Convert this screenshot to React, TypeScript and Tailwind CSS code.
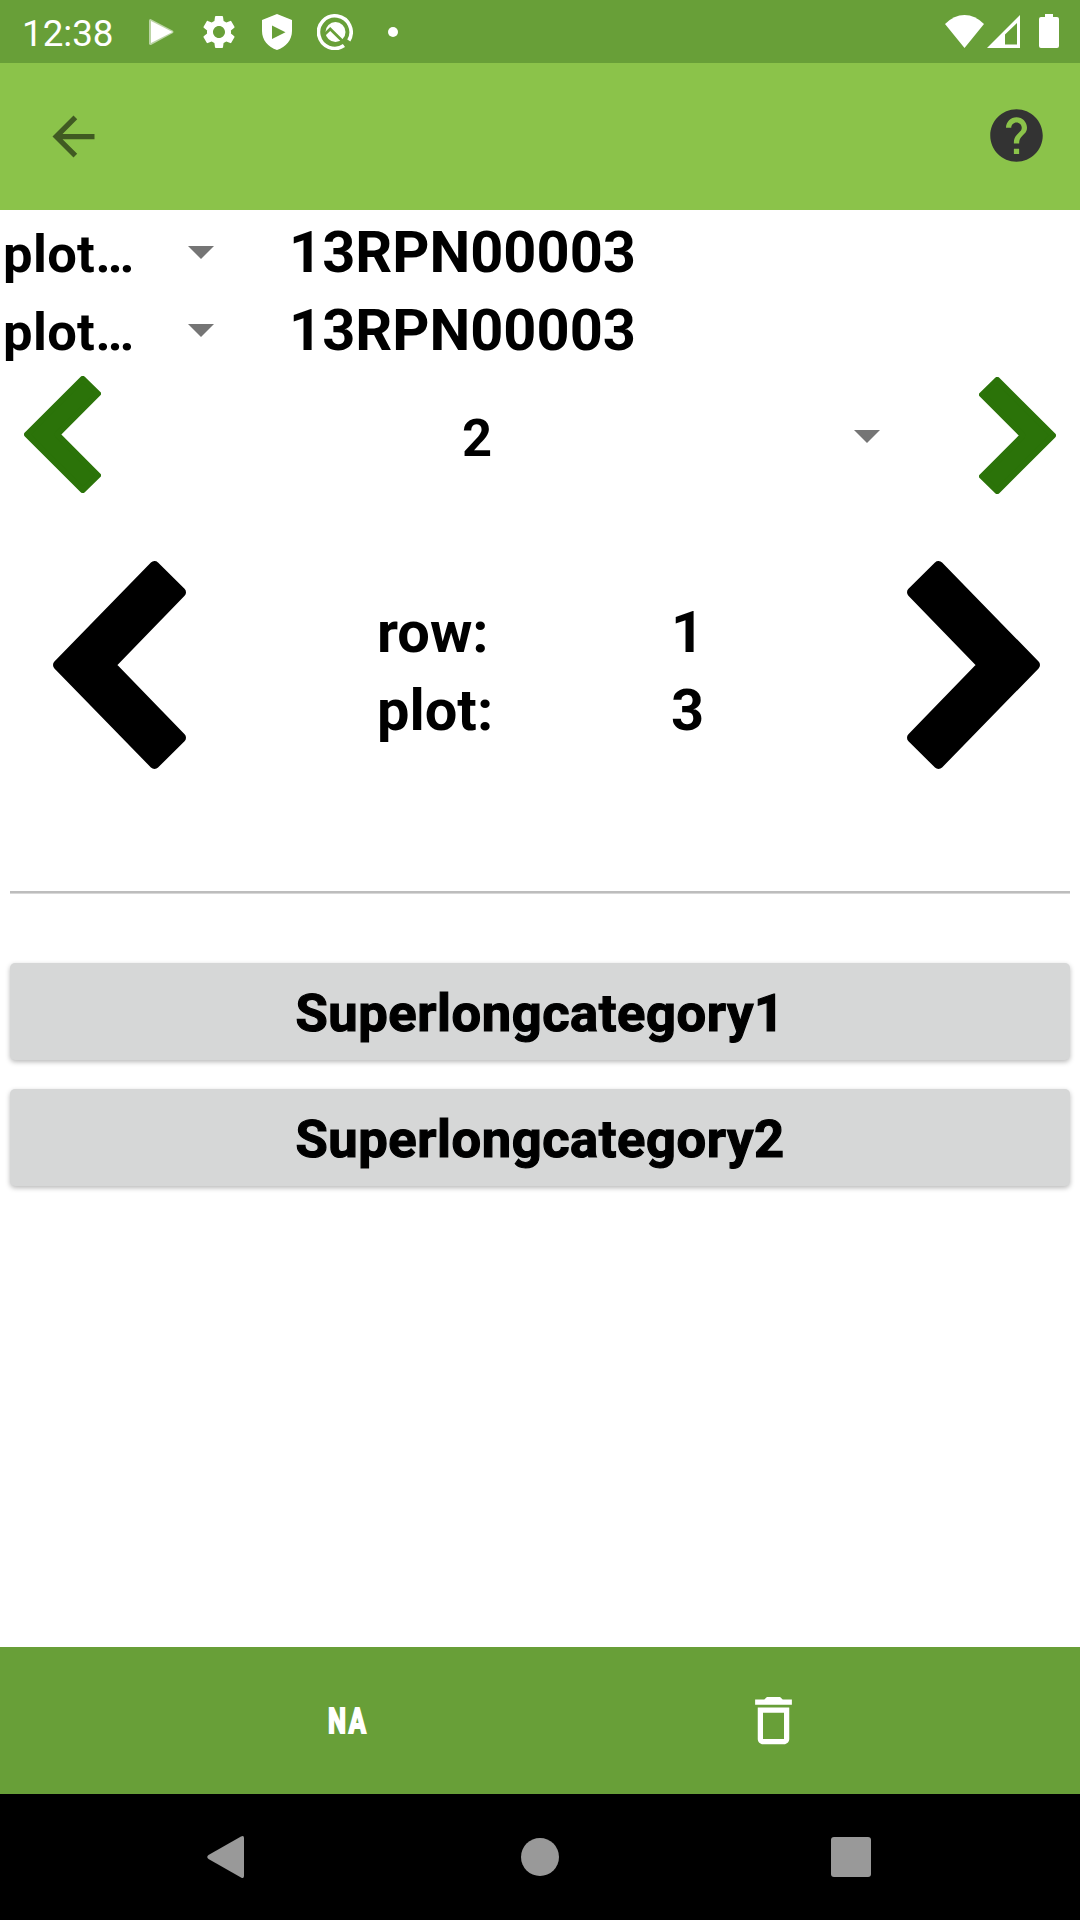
import React from "react";
import { MdArrowBack, MdDeleteOutline, MdHelp, MdSettings } from "react-icons/md";

function Caret({ className = "" }: { className?: string }) {
  return (
    <svg className={`h-[13px] w-[26px] shrink-0 ${className}`} viewBox="0 0 26 13" fill="#757575">
      <path d="M0 0h26L13 13z" />
    </svg>
  );
}

function StatusBar() {
  return (
    <header className="flex h-[63px] shrink-0 items-center bg-[#689f38] text-white">
      <span className="ml-[22px] w-[127px] pt-[3px] text-[36.75px] leading-[43px]">12:38</span>
      <svg className="h-[26px] w-[25px]" viewBox="0 0 25 26" fill="#fff">
        <path d="M0 1.5Q0 0 1.5 0L24 11.8Q25 13 24 14L2 26Q0 26 0 24.5z" opacity=".55" />
        <path d="M2 2L23.5 13L2 24z" />
      </svg>
      <MdSettings className="ml-[25px] size-[40px]" />
      <svg className="ml-[23px] h-[36px] w-[30px]" viewBox="0 0 30 36" fill="#fff">
        <path
          fillRule="evenodd"
          d="M15 0L30 6v11c0 9-6 16-15 19C6 33 0 26 0 17V6zM10 11.500v13.500l13.500-6.750z"
        />
      </svg>
      <svg className="ml-[25px] size-[36px]" viewBox="0 0 36 36" fill="none" stroke="#fff">
        <path d="M27 31.600A16.300 16.300 0 1 1 31.800 26.500" strokeWidth="3.600" />
        <circle cx="18.500" cy="18" r="10" fill="#fff" stroke="none" />
        <path d="M7.500 20.500L13.200 15L29 30.500" stroke="#689f38" strokeWidth="2.800" />
        <path d="M25.500 27L32.500 34" stroke="#689f38" strokeWidth="2.800" />
      </svg>
      <span className="ml-[35px] size-[10px] rounded-full bg-white" />
      <svg className="ml-auto h-[33px] w-[39px]" viewBox="0 0 39 33" fill="#fff">
        <path d="M0 9Q9 0 19.500 0Q30 0 39 9L19.500 33z" />
      </svg>
      <svg className="ml-[3px] h-[33px] w-[33px]" viewBox="0 0 33 33" fill="#fff">
        <path fillRule="evenodd" d="M33 0V33H0zM30 8L18 19.500V29.500H30z" />
      </svg>
      <svg className="mr-[21px] mb-[1px] ml-[19px] h-[34px] w-[20px]" viewBox="0 0 20 34" fill="#fff">
        <path d="M6 0h8v3h4q2 0 2 2v27q0 2-2 2H2q-2 0-2-2V5q0-2 2-2h4z" />
      </svg>
    </header>
  );
}

function PlotRow() {
  return (
    <div className="flex h-[78px] items-center">
      <span className="w-[185px] pt-[3px] pl-[3px] text-[52.5px] leading-[62px] tracking-[0.35px]">plot…</span>
      <Caret className="ml-[2.5px]" />
      <span className="ml-[75.5px] text-[57.75px] leading-[78px]">13RPN00003</span>
    </div>
  );
}

function Chevron({ className, right = false }: { className: string; right?: boolean }) {
  return (
    <svg
      className={`shrink-0 ${className} ${right ? "-scale-x-100" : ""}`}
      viewBox="0 0 133 209"
      preserveAspectRatio="none"
      fill="currentColor"
      stroke="currentColor"
      strokeWidth="10"
      strokeLinejoin="round"
    >
      <path d="M5 104.500L101.500 5L128 31.500L57.500 104.500L128 177.500L101.500 204z" />
    </svg>
  );
}

function CategoryButton({ label }: { label: string }) {
  return (
    <button className="flex h-[97px] w-full items-center justify-center rounded-[5px] bg-[#d6d7d7] pt-[2px] text-[52.5px] leading-[62px] font-bold tracking-[0.55px] [-webkit-text-stroke:1.2px_#000] shadow-[0_2px_5px_rgba(0,0,0,0.28)]">
      {label}
    </button>
  );
}

export default function App() {
  return (
    <div className="flex h-[1920px] w-[1080px] flex-col bg-white font-[Roboto,sans-serif] text-black">
      <StatusBar />
      <div className="flex h-[147px] shrink-0 items-center justify-between bg-[#8bc34a] pr-[32px] pl-[42px]">
        <MdArrowBack className="size-[63px] text-[#405a22]" />
        <MdHelp className="mb-[2px] size-[63px] text-[#333333]" />
      </div>

      <main className="flex flex-1 flex-col font-bold">
        <div className="pt-[3px]">
          <PlotRow />
          <PlotRow />
        </div>

        <div className="flex h-[134px] items-center px-[24px]">
          <Chevron className="mb-[4px] h-[117px] w-[77px] text-[#2b7309]" />
          <span className="ml-[361px] w-[391px] pt-[3px] text-[52.5px] leading-[62px]">2</span>
          <Caret className="ml-[1px] mt-[1px]" />
          <Chevron right className="mb-[1px] ml-auto h-[117px] w-[77px] text-[#2b7309]" />
        </div>

        <div className="mt-[57px] flex h-[209px] items-center pr-[40px] pl-[53px]">
          <Chevron className="h-[208px] w-[133px]" />
          <div className="ml-[191px] grid w-[530px] grid-cols-[294px_1fr] pt-[12px] text-[57.75px] leading-[78px]">
            <span>row:</span>
            <span>1</span>
            <span>plot:</span>
            <span>3</span>
          </div>
          <Chevron right className="h-[208px] w-[133px]" />
        </div>

        <div className="mx-[10px] mt-[122px] h-[3px] border-b border-[#d8d8d8] bg-[#bdbdbd]" />

        <div className="mx-[10px] mt-[69px] flex flex-col gap-[29px]">
          <CategoryButton label="Superlongcategory1" />
          <CategoryButton label="Superlongcategory2" />
        </div>
      </main>

      <div className="flex h-[147px] shrink-0 items-center bg-[#689f38] text-white">
        <span className="ml-[328px] w-[414px] origin-left scale-x-[0.72] text-[35.5px] leading-[44px] font-bold tracking-[3.5px] [-webkit-text-stroke:2px_#fff]">
          NA
        </span>
        <MdDeleteOutline className="size-[63px]" />
      </div>

      <nav className="flex h-[126px] shrink-0 items-center bg-black text-[#999999]">
        <svg className="ml-[207px] h-[42px] w-[37px]" viewBox="0 0 37 42" fill="currentColor">
          <path d="M34 0.500Q37-1 37 2V40Q37 43 34 41.500L1.500 23Q-1 21 1.500 19z" />
        </svg>
        <span className="ml-[277px] size-[38px] rounded-full bg-[#999999]" />
        <span className="ml-[272px] size-[40px] rounded-[3px] bg-[#999999]" />
      </nav>
    </div>
  );
}
